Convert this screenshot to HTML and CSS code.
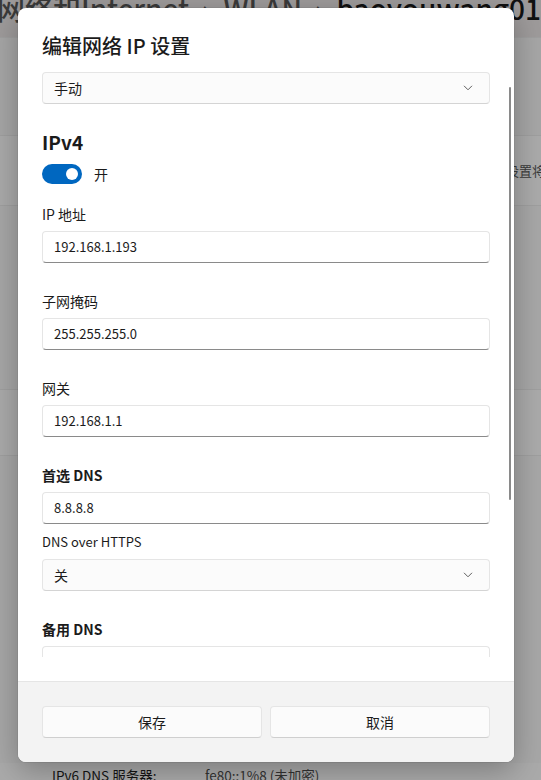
FILE: index.html
```html
<!DOCTYPE html>
<html lang="zh-CN">
<head>
<meta charset="utf-8">
<title>编辑网络 IP 设置</title>
<link rel="stylesheet" href="styles.css">
</head>
<body>
<div class="page">
  <div class="header">
    <div class="crumbs">
      <span class="crumb-prev">网络和Internet</span>
      <span class="crumb-sep">›</span>
      <span class="crumb-prev">WLAN</span>
      <span class="crumb-sep">›</span>
      <span class="crumb-cur">baoyouwang01</span>
    </div>
  </div>
  <div class="bg-row r1"></div>
  <div class="bg-row r2"><span class="bg-desc">设置将影响此网络</span></div>
  <div class="bg-row r3"></div>
  <div class="bg-row r4"></div>
  <div class="bg-row r5"></div>
  <div class="bg-row r6">
    <span class="bg-key">IPv6 DNS 服务器:</span>
    <span class="bg-val">fe80::1%8 (未加密)</span>
  </div>
</div>

<div class="dialog">
  <div class="dialog-body">
    <div class="scroll">
      <h1 class="title">编辑网络 IP 设置</h1>
      <div class="select">
        <span>手动</span>
        <svg class="chev" width="10" height="6" viewBox="0 0 10 6"><path d="M1 0.8 L5 4.8 L9 0.8" fill="none" stroke="#5f5f5f" stroke-width="1"/></svg>
      </div>

      <h2 class="section">IPv4</h2>
      <div class="toggle-row">
        <span class="toggle"><span class="knob"></span></span>
        <span class="toggle-text">开</span>
      </div>

      <div class="field">
        <div class="label">IP 地址</div>
        <div class="input">192.168.1.193</div>
      </div>
      <div class="field">
        <div class="label">子网掩码</div>
        <div class="input">255.255.255.0</div>
      </div>
      <div class="field">
        <div class="label">网关</div>
        <div class="input">192.168.1.1</div>
      </div>
      <div class="field">
        <div class="label strong">首选 DNS</div>
        <div class="input">8.8.8.8</div>
        <div class="label sub">DNS over HTTPS</div>
        <div class="select">
          <span>关</span>
          <svg class="chev" width="10" height="6" viewBox="0 0 10 6"><path d="M1 0.8 L5 4.8 L9 0.8" fill="none" stroke="#5f5f5f" stroke-width="1"/></svg>
        </div>
      </div>
      <div class="field">
        <div class="label strong">备用 DNS</div>
        <div class="input"></div>
      </div>
    </div>
  </div>
  <div class="footer">
    <button class="btn">保存</button>
    <button class="btn">取消</button>
  </div>
  <div class="thumb"></div>
</div>
</body>
</html>
```

FILE: styles.css
```css
* {
  box-sizing: border-box;
  margin: 0;
  padding: 0;
}

html, body {
  width: 541px;
  height: 780px;
  overflow: hidden;
}

body {
  position: relative;
  font-family: "Noto Sans CJK SC", "Noto Sans", sans-serif;
  background: #a8a8a8;
  color: #1b1b1b;
}

/* dimmed settings page behind the dialog */
.page {
  display: flex;
  flex-direction: column;
  height: 780px;
}

.header {
  height: 37px;
  background: #9e9b9b;
  flex: none;
}

.crumbs {
  display: flex;
  align-items: baseline;
  margin-top: -9px;
  margin-left: -3px;
  font-size: 28px;
  line-height: 34px;
  font-weight: 500;
  white-space: nowrap;
}

.crumb-prev {
  color: #3a3a3a;
}

.crumb-sep {
  width: 54px;
  text-align: center;
  color: #3a3a3a;
  font-weight: 400;
}

.crumb-cur {
  color: #111111;
}

.bg-row {
  flex: none;
  border-top: 1px solid #9f9f9f;
  background: #aaaaaa;
}

.r1 { height: 98px; background: #a6a6a6; }
.r2 {
  height: 70px;
  display: flex;
  align-items: center;
  padding-left: 506px;
  white-space: nowrap;
  font-size: 13px;
  color: #3a3a3a;
}
.r3 { height: 184px; background: #a7a7a7; }
.r4 { height: 66px; }
.r5 { height: 308px; background: #a7a7a7; }
.r6 {
  flex: 1;
  border-top: none;
  display: flex;
  padding-left: 52px;
  padding-top: 2px;
  font-size: 13.5px;
  line-height: 20px;
  white-space: nowrap;
}

.bg-key {
  width: 153px;
  color: #141414;
}

.bg-val {
  color: #333333;
}

/* dialog */
.dialog {
  position: absolute;
  left: 18px;
  top: 8px;
  width: 496px;
  height: 754px;
  background: #ffffff;
  border-radius: 8px;
  box-shadow: 0 8px 30px rgba(0, 0, 0, 0.28), 0 0 0 1px rgba(0, 0, 0, 0.05);
  display: flex;
  flex-direction: column;
  overflow: hidden;
}

.dialog-body {
  flex: 1;
  min-height: 0;
  padding: 24px;
  display: flex;
  flex-direction: column;
}

.scroll {
  flex: 1;
  min-height: 0;
  overflow: hidden;
}

.title {
  font-size: 20px;
  line-height: 28px;
  font-weight: 500;
  margin-bottom: 12px;
}

.select {
  height: 32px;
  border: 1px solid #e5e5e5;
  border-bottom-color: #d4d4d4;
  border-radius: 4px;
  background: #fbfbfb;
  display: flex;
  align-items: center;
  justify-content: space-between;
  padding: 0 16px 0 11px;
  font-size: 14px;
}

.chev {
  display: block;
}

.section {
  margin-top: 24px;
  font-size: 19px;
  line-height: 28px;
  font-weight: 600;
  margin-bottom: 8px;
}

.toggle-row {
  display: flex;
  align-items: center;
  gap: 12px;
  height: 20px;
  margin-bottom: 20px;
}

.toggle {
  width: 40px;
  height: 20px;
  border-radius: 10px;
  background: #0067c0;
  display: flex;
  align-items: center;
  justify-content: flex-end;
  padding-right: 4px;
}

.knob {
  width: 12px;
  height: 12px;
  border-radius: 50%;
  background: #ffffff;
}

.toggle-text {
  font-size: 14px;
  line-height: 20px;
}

.field {
  margin-bottom: 28px;
}

.label {
  font-size: 14px;
  line-height: 20px;
  margin-bottom: 7px;
}

.label.strong {
  font-weight: 600;
}

.label.sub {
  margin-top: 8px;
  font-size: 13px;
}

.input {
  height: 32px;
  border: 1px solid #e5e5e5;
  border-bottom-color: #8a8a8a;
  border-radius: 4px;
  background: #ffffff;
  padding: 0 11px;
  font-size: 13px;
  line-height: 30px;
}

.footer {
  flex: none;
  background: #f3f3f3;
  border-top: 1px solid #e5e5e5;
  padding: 24px;
  display: grid;
  grid-template-columns: 1fr 1fr;
  gap: 8px;
}

.btn {
  height: 32px;
  border: 1px solid #e5e5e5;
  border-bottom-color: #cfcfcf;
  border-radius: 4px;
  background: #fbfbfb;
  font-family: inherit;
  font-size: 14px;
  color: #1b1b1b;
}

.thumb {
  position: absolute;
  right: 3px;
  top: 79px;
  width: 2px;
  height: 413px;
  border-radius: 1px;
  background: #8a8a8a;
}
```
